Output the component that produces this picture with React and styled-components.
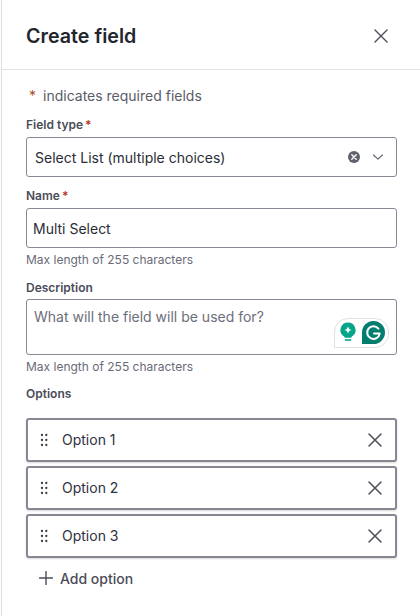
import React from "react";
import styled, { createGlobalStyle } from "styled-components";

const Global = createGlobalStyle`
  html, body { margin: 0; padding: 0; background: #fff; }
  body { font-family: Inter, "Liberation Sans", sans-serif; color: #2b2d36; }
`;

const Panel = styled.div`
  width: 419px;
  height: 616px;
  box-sizing: border-box;
  border-left: 1px solid #dcdde1;
  margin-left: 1px;
  overflow: hidden;
  background: #fff;
`;

const Header = styled.header`
  height: 70px;
  box-sizing: border-box;
  border-bottom: 1px solid #e0e1e4;
  display: flex;
  align-items: center;
  justify-content: space-between;
  padding: 3px 29px 0 24px;
`;

const Title = styled.h1`
  margin: 0;
  font-size: 19.7px;
  line-height: 28px;
  font-weight: 600;
  color: #24262e;
`;

const IconBtn = styled.button`
  border: 0;
  background: none;
  padding: 0;
  display: flex;
  color: #4b4d58;
`;

const ChevronWrap = styled.span`
  display: flex;
  margin-left: 10px;
`;

const Body = styled.div`
  padding: 17px 23px 0 24px;
  display: flex;
  flex-direction: column;
`;

const Required = styled.p`
  margin: 0 0 12px;
  font-size: 14px;
  line-height: 18px;
  color: #5a5c68;
  display: flex;
  gap: 7px;
  padding-left: 3px;
`;

const Star = styled.span`
  color: #a8501f;
`;

const Label = styled.label`
  display: block;
  font-size: 12px;
  line-height: 16px;
  font-weight: 600;
  color: #4a4c58;
  margin-bottom: ${(p) => p.$gap ?? 4}px;
`;

const LabelStar = styled.span`
  color: #b5381f;
  margin-left: 2px;
`;

const Control = styled.div`
  box-sizing: border-box;
  width: 371px;
  height: ${(p) => p.$height || 40}px;
  border: 1px solid #868894;
  border-radius: 3px;
  background: #fff;
  font-size: 14px;
  color: #2b2d36;
  display: flex;
  align-items: center;
  position: relative;
`;

const SelectControl = styled(Control)`
  padding: 0 11px 0 8px;
  margin-bottom: 11px;
`;

const InputControl = styled(Control)`
  padding: 0 6px;
`;

const TextControl = styled(Control)`
  align-items: flex-start;
  padding: 8px 7px;
  color: #6c6e7a;
  line-height: 18px;
`;

const Grow = styled.span`
  flex: 1;
`;

const Help = styled.div`
  font-size: 12px;
  line-height: 16px;
  color: #696b77;
  margin: 4px 0 ${(p) => p.$after ?? 12}px;
`;

const OptionsLabel = styled(Label)`
  margin-bottom: 16px;
`;

const Options = styled.div`
  display: flex;
  flex-direction: column;
  gap: 4px;
`;

const OptionRow = styled.div`
  box-sizing: border-box;
  width: 371px;
  height: 44px;
  border: 2px solid #868894;
  border-radius: 3px;
  background: #fff;
  box-shadow: 0 1px 2px rgba(60, 62, 75, 0.2);
  display: flex;
  align-items: center;
  padding: 0 10px 0 12px;
  font-size: 14px;
  color: #2f3140;
`;

const OptionText = styled.span`
  flex: 1;
  margin-left: 10px;
  padding-bottom: 1px;
`;

const AddRow = styled.button`
  border: 0;
  background: none;
  font: inherit;
  font-size: 14px;
  font-weight: 500;
  color: #4a4c58;
  display: flex;
  align-items: center;
  gap: 7px;
  padding: 0;
  margin: 10px 0 0 13px;
  height: 20px;
`;

const Grammarly = styled.div`
  position: absolute;
  right: 7px;
  bottom: 6px;
  width: 55px;
  height: 30px;
  box-sizing: border-box;
  background: #fff;
  border: 1px solid #dfe1e6;
  border-radius: 14px 14px 14px 0;
  display: flex;
  align-items: center;
  justify-content: flex-end;
  gap: 6px;
  padding: 0 3px 2px 0;
`;

const Close = ({ size = 20, sw = 1.5 }) => (
  <svg width={size} height={size} viewBox="0 0 20 20" fill="none" stroke="currentColor" strokeWidth={sw} strokeLinecap="round">
    <path d="M4 4 16 16M16 4 4 16" />
  </svg>
);

const Grip = () => (
  <svg width="12" height="14" viewBox="0 0 12 14" fill="#3a3c48">
    {[2, 7, 12].flatMap((y) => [2, 6.3].map((x) => <circle key={`${x}-${y}`} cx={x} cy={y} r="1.15" />))}
  </svg>
);

const ClearIcon = () => (
  <svg width="14" height="14" viewBox="0 0 14 14">
    <circle cx="7" cy="7" r="6" fill="#5f616c" />
    <path d="M4.8 4.8 9.2 9.2M9.2 4.8 4.8 9.2" stroke="#fff" strokeWidth="1.4" strokeLinecap="round" />
  </svg>
);

const Chevron = () => (
  <svg width="14" height="14" viewBox="0 0 14 14" fill="none" stroke="#5f616c" strokeWidth="1.1" strokeLinecap="round" strokeLinejoin="round">
    <path d="M2.5 5 7 9.2 11.5 5" />
  </svg>
);

const Plus = () => (
  <svg width="14" height="14" viewBox="0 0 14 14" fill="none" stroke="#4b4d58" strokeWidth="1.4" strokeLinecap="round">
    <path d="M7 .5v13M.5 7h13" />
  </svg>
);

const Bulb = () => (
  <svg width="16" height="20" viewBox="0 0 16 20">
    <path d="M8 0.5a7.5 7.5 0 0 1 4.2 13.7c-.6.4-.9 1-1 1.6H4.8c-.1-.6-.4-1.2-1-1.6A7.5 7.5 0 0 1 8 .5z" fill="#05a58a" />
    <path d="M4.8 17.2h6.4v1.6H4.8z" fill="#05a58a" />
    <path d="M8 4.6 9.2 7l2.2 1-2.2 1.1L8 11.4 6.8 9.1 4.6 8l2.2-1z" fill="#fff" />
  </svg>
);

const GLogo = () => (
  <svg width="23" height="23" viewBox="0 0 23 23">
    <path d="M11.5 0a11.5 11.5 0 0 1 0 23H0V11.5A11.5 11.5 0 0 1 11.5 0z" fill="#027e6f" />
    <path d="M16.4 7.6a6.3 6.3 0 1 0 1.3 5H12" fill="none" stroke="#fff" strokeWidth="2" strokeLinecap="round" strokeLinejoin="round" />
  </svg>
);

export default function App() {
  return (
    <Panel>
      <Global />
      <Header>
        <Title>Create field</Title>
        <IconBtn aria-label="Close"><Close size={20} sw={1.4} /></IconBtn>
      </Header>
      <Body>
        <Required><Star>*</Star>indicates required fields</Required>
        <Label>Field type<LabelStar>*</LabelStar></Label>
        <SelectControl>
          <Grow>Select List (multiple choices)</Grow>
          <ClearIcon />
          <ChevronWrap><Chevron /></ChevronWrap>
        </SelectControl>
        <Label>Name<LabelStar>*</LabelStar></Label>
        <InputControl>Multi Select</InputControl>
        <Help>Max length of 255 characters</Help>
        <Label $gap={3}>Description</Label>
        <TextControl $height={56}>
          What will the field will be used for?
          <Grammarly><Bulb /><GLogo /></Grammarly>
        </TextControl>
        <Help $after={11}>Max length of 255 characters</Help>
        <OptionsLabel>Options</OptionsLabel>
        <Options>
          {["Option 1", "Option 2", "Option 3"].map((o) => (
            <OptionRow key={o}>
              <Grip />
              <OptionText>{o}</OptionText>
              <IconBtn aria-label={`Remove ${o}`}><Close size={20} sw={1.5} /></IconBtn>
            </OptionRow>
          ))}
        </Options>
        <AddRow><Plus />Add option</AddRow>
      </Body>
    </Panel>
  );
}
